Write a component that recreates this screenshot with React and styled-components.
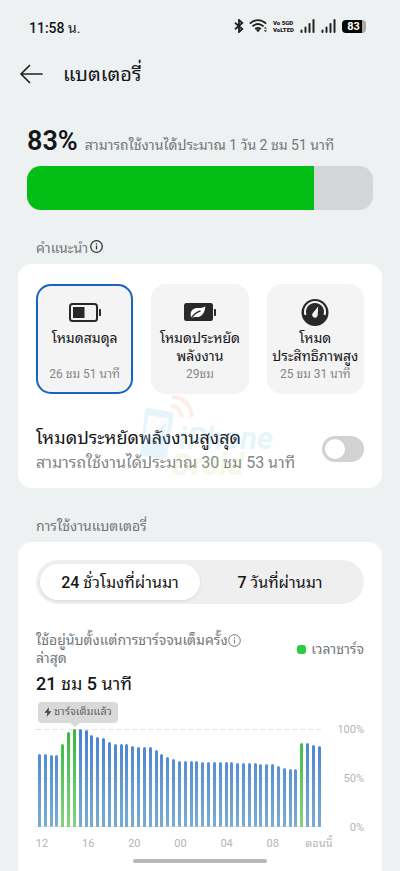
import React, { useState } from 'react';
import styled, { createGlobalStyle } from 'styled-components';

const GlobalStyle = createGlobalStyle`
  * {
    box-sizing: border-box;
  }
  body {
    margin: 0;
    background: #edf1f2;
    color: #151618;
    font-family: Roboto, "Noto Sans Thai Looped", "Noto Sans", sans-serif;
  }
  button {
    font: inherit;
    color: inherit;
    border: 0;
    padding: 0;
    background: none;
    cursor: pointer;
  }
  h1, h2, h3, p {
    margin: 0;
    font-weight: 400;
  }
  svg {
    display: block;
    flex: none;
  }
`

const Page = styled.div`
  display: flex;
  flex-direction: column;
  min-height: 100vh;
`

const StatusBar = styled.div`
  display: flex;
  align-items: center;
  justify-content: space-between;
  height: 52px;
  padding: 0 34px 0 29px;
  font-size: 14px;
`

const Num = styled.b`
  font-weight: 500;
`

const StatusIcons = styled.div`
  display: flex;
  align-items: center;
  gap: 5px;
`

const Header = styled.header`
  display: flex;
  align-items: center;
  gap: 20px;
  height: 44px;
  padding: 0 20px;
`

const Title = styled.h1`
  font-size: 20px;
  line-height: 28px;
`

const Summary = styled.section`
  padding: 28px 27px 0;
`

const Level = styled.div`
  display: flex;
  align-items: baseline;
  gap: 7px;
  height: 42px;
  line-height: 34px;
  white-space: nowrap;
`

const Percent = styled.strong`
  font-size: 27px;
  font-weight: 600;
`

const Estimate = styled.span`
  font-size: 14px;
  color: #74777a;
`

const Track = styled.div`
  height: 44px;
  border-radius: 14px;
  background: #d3d6d7;
  overflow: hidden;
`

const Fill = styled.div`
  height: 100%;
  background: #02be14;
`

const SectionLabel = styled.h2`
  display: flex;
  align-items: center;
  gap: 2px;
  height: 54px;
  padding: 18px 36px 0;
  font-size: 14px;
  color: #74777a;
`

const Card = styled.section`
  position: relative;
  margin: 0 18px;
  padding: ${props => props.$grow ? '18px' : '20px 18px 0'};
  border-radius: ${props => props.$grow ? '14px 14px 0 0' : '14px'};
  background: #fff;
  flex: ${props => props.$grow ? '1' : 'none'};
`

const Modes = styled.div`
  display: grid;
  grid-template-columns: repeat(3, 1fr);
  gap: 18px;
`

const Mode = styled.button`
  display: flex;
  flex-direction: column;
  align-items: center;
  height: 110px;
  padding-top: 14px;
  border-radius: 15px;
  background: #f4f4f4;
  box-shadow: ${props => props.$active ? 'inset 0 0 0 2px #1763c0' : 'none'};
`

const ModeName = styled.span`
  height: 37px;
  margin-top: 1px;
  font-size: 14px;
  line-height: 18px;
  white-space: pre;
`

const ModeTime = styled.span`
  font-size: 12px;
  line-height: 16px;
  color: #858585;
  white-space: nowrap;
`

const SuperRow = styled.div`
  display: flex;
  align-items: center;
  justify-content: space-between;
  height: 78px;
  margin-top: 16px;
`

const RowText = styled.label`
  display: flex;
  flex-direction: column;
  padding-top: 2px;
  line-height: 25px;
  font-size: 18px;
  white-space: nowrap;
`

const RowHint = styled.span`
  font-size: 16px;
  color: #858585;
`

const Switch = styled.input`
  appearance: none;
  display: flex;
  align-items: center;
  justify-content: ${props => props.checked ? 'flex-end' : 'flex-start'};
  flex: none;
  width: 42px;
  height: 26px;
  margin: 0;
  padding: 3px;
  border-radius: 13px;
  background: ${props => props.checked ? '#1763c0' : '#d2d2d2'};
  &::before {
    content: '';
    width: 20px;
    height: 20px;
    border-radius: 50%;
    background: #fff;
  }
`

const Watermark = styled.div`
  position: absolute;
  left: 121px;
  top: 128px;
  display: flex;
  pointer-events: none;
  font-size: 31px;
  font-style: italic;
  font-weight: 700;
  line-height: 26px;
  opacity: 0.15;
`

const WatermarkText = styled.div`
  display: flex;
  flex-direction: column;
  margin-left: -18px;
  padding-top: 34px;
  color: #62bde8;
`

const WatermarkGreen = styled.span`
  margin-left: -7px;
  color: #bcd878;
`

const Tabs = styled.div`
  display: grid;
  grid-template-columns: 1fr 1fr;
  height: 44px;
  padding: 4px;
  border-radius: 22px;
  background: #efefef;
`

const Tab = styled.button`
  padding-bottom: 3px;
  border-radius: 18px;
  font-size: 16px;
  white-space: nowrap;
  background: ${props => props.$active ? '#fff' : 'transparent'};
  box-shadow: ${props => props.$active ? '0 1px 3px rgba(0, 0, 0, 0.1)' : 'none'};
`

const UsageHead = styled.div`
  display: flex;
  justify-content: space-between;
  align-items: center;
  margin-top: 27px;
  font-size: 14px;
  line-height: 18px;
  color: #74777a;
`

const Since = styled.p`
  white-space: nowrap;
`

const SinceLine = styled.span`
  display: flex;
  align-items: center;
`

const Legend = styled.div`
  display: flex;
  align-items: center;
  gap: 5px;
  &::before {
    content: '';
    width: 9px;
    height: 9px;
    border-radius: 3px;
    background: #2bcb42;
  }
`

const Duration = styled.h3`
  margin-top: 4px;
  font-size: 18px;
  line-height: 26px;
`

const Chart = styled.div`
  display: grid;
  grid-template-columns: 1fr 43px;
  margin-top: 32px;
`

const Plot = styled.div`
  position: relative;
  display: flex;
  align-items: flex-end;
  justify-content: space-between;
  height: 98px;
  padding: 0 0 0 2px;
  background:
    repeating-linear-gradient(90deg, #e3e3e3 0 5px, transparent 5px 8px) top / 100% 1px no-repeat,
    linear-gradient(#eeeeee, #eeeeee) center / 100% 1px no-repeat,
    linear-gradient(#e3e3e3, #e3e3e3) bottom / 100% 1px no-repeat;
`

const Bar = styled.div`
  width: 3px;
  border-radius: 2px 2px 0 0;
  background: ${props => props.$charging
    ? 'linear-gradient(#35b83f, #83d47f) bottom / 100% 98px'
    : 'linear-gradient(#457fd3, #79add3) bottom / 100% 98px'};
`

const Callout = styled.div`
  position: absolute;
  left: 2px;
  top: -27px;
  display: flex;
  align-items: center;
  gap: 2px;
  height: 21px;
  padding: 0 6px 2px;
  border-radius: 4px;
  background: #d9d9d9;
  color: #666;
  font-size: 11px;
  line-height: 16px;
  white-space: nowrap;
  &::after {
    content: '';
    position: absolute;
    left: 32px;
    top: 100%;
    border: 5px solid transparent;
    border-top: 4px solid #d9d9d9;
    border-bottom: 0;
  }
`

const Scale = styled.div`
  display: flex;
  flex-direction: column;
  justify-content: space-between;
  height: 112px;
  margin-top: -6px;
  font-size: 11px;
  line-height: 14px;
  text-align: right;
  color: #b4b4b4;
`

const Hours = styled.div`
  display: flex;
  justify-content: space-between;
  margin: 8px -4px 0 0;
  font-size: 11px;
  line-height: 18px;
  color: #b4b4b4;
`

const Hour = styled.span`
  display: flex;
  justify-content: center;
  width: 12px;
  white-space: nowrap;
`

const HomeIndicator = styled.div`
  position: fixed;
  left: 50%;
  bottom: 8px;
  width: 134px;
  height: 4px;
  border-radius: 2px;
  background: #b8b8b8;
  transform: translateX(-50%);
`

const BluetoothIcon = () => (
  <svg width="10" height="14" viewBox="0 0 10 14" fill="none" stroke="#222" strokeWidth="1.8">
    <path d="M1 3.7 8.3 10 5 13V1l3.3 3L1 10.3" />
  </svg>
)

const WifiIcon = () => (
  <svg width="19" height="14" viewBox="0 0 19 14" fill="none" stroke="#222" strokeWidth="1.8">
    <path d="M.8 4.6q8.2-7 16.4 0M3.4 7.4q5.6-4.7 11.2 0M6.1 10q2.9-2.3 5.8 0" />
    <path d="m6.8 10.8 2.2 2.4 2.2-2.4q-2.2-1.7-4.4 0Z" fill="#222" stroke="none" />
    <path d="M14.8 9.6 16.4 8l1.6 1.6zM14.8 11.3l1.6 1.6 1.6-1.6z" fill="#222" stroke="none" />
  </svg>
)

const Carrier = styled.span`
  display: flex;
  flex-direction: column;
  width: 22px;
  font-size: 6px;
  font-weight: 900;
  line-height: 7px;
  white-space: nowrap;
`

const SignalIcon = () => (
  <svg width="16" height="14" viewBox="0 0 16 14" stroke="#222" strokeWidth="2" strokeLinecap="round">
    <path d="M1.5 11.5V13M5.5 8.5V13M9.5 5v8M13.5 1v12" />
  </svg>
)

const BatteryBadge = styled.span`
  display: flex;
  align-items: center;
  justify-content: center;
  width: 24px;
  height: 13px;
  padding-right: 1px;
  border-radius: 4px;
  background: linear-gradient(90deg, #050505 85%, #a7aaab 85%);
  color: #fff;
  font-size: 11px;
  font-weight: 700;
`

const BackIcon = () => (
  <svg width="23" height="20" viewBox="0 0 23 20" fill="none" stroke="#222" strokeWidth="1.7" strokeLinecap="round" strokeLinejoin="round">
    <path d="M22 10H1M9.5 1.5 1 10l8.5 8.5" />
  </svg>
)

const InfoIcon = props => (
  <svg width="13" height="13" viewBox="0 0 13 13" fill="none" stroke={props.color} strokeWidth={props.weight}>
    <circle cx="6.5" cy="6.5" r="5.8" />
    <path d="M6.5 5.6v4M6.5 3.2v1.3" />
  </svg>
)

const BalancedIcon = () => (
  <svg width="34" height="30" viewBox="0 0 34 30">
    <rect x="2" y="6" width="27" height="17" rx="2.5" fill="none" stroke="#292929" strokeWidth="2" />
    <path d="M5 9h11.5v11H5z" fill="#292929" />
    <path d="M31 11h1q1 0 1 1v5q0 1-1 1h-1z" fill="#292929" />
  </svg>
)

const SaverIcon = () => (
  <svg width="34" height="30" viewBox="0 0 34 30">
    <rect x="1" y="5" width="29" height="18" rx="2.5" fill="#292929" />
    <path d="M31 11h1q1 0 1 1v5q0 1-1 1h-1z" fill="#292929" />
    <path d="M8 19.5c-1.5-7 2-9.5 7-9.5 3 0 5-.3 7.3-1.8-.3 7.5-4.5 12-11.3 10.7L8.5 20.5Z" fill="#fff" />
    <path d="M8 20.5c2.5-4 5.5-6.3 9.5-7.7" fill="none" stroke="#292929" strokeWidth="1.3" />
  </svg>
)

const PerformanceIcon = () => (
  <svg width="34" height="30" viewBox="0 0 34 30">
    <circle cx="17" cy="14.5" r="13.5" fill="#292929" />
    <path d="M7.5 17a10 10 0 1 1 19 0" fill="none" stroke="#f4f4f4" strokeWidth="2" />
    <path d="M20.2 8.5 19.7 17a2.8 2.8 0 1 1-5.2-1.6Z" fill="#f4f4f4" />
  </svg>
)

const BoltIcon = () => (
  <svg width="8" height="10" viewBox="0 0 8 10" fill="#444">
    <path d="M5 .3.5 5.7h2.8l-.5 4.1 4.7-5.5H4.6Z" />
  </svg>
)

const PhoneMark = () => (
  <svg width="58" height="74" viewBox="0 0 58 74">
    <path d="M9 16 32 20q3 1 2.5 4L28 65q-.5 3-3.5 2.5L4 64q-3-.5-2.5-3.5L6 19q.5-3 3-3Z" fill="#62bde8" />
    <path d="m9 23 21 3.5-4 29L5 52Z" fill="#e8f8ff" />
    <path d="m5 52 22-22-2 26Z" fill="#62bde8" />
    <g fill="none" stroke="#f5925b" strokeWidth="4">
      <path d="M32 14q9 0 11 11M33 5q18 1 20 20" />
    </g>
  </svg>
)

const modes = [
  { name: 'โหมดสมดุล', time: '26 ชม 51 นาที', icon: <BalancedIcon /> },
  { name: 'โหมดประหยัด\nพลังงาน', time: '29ชม', icon: <SaverIcon /> },
  { name: 'โหมด\nประสิทธิภาพสูง', time: '25 ชม 31 นาที', icon: <PerformanceIcon /> },
]

const tabs = [
  { count: 24, name: 'ชั่วโมงที่ผ่านมา' },
  { count: 7, name: 'วันที่ผ่านมา' },
]

const levels = [
  75, 74, 73, 73, 85, 97, 100, 100, 99, 94, 92, 91, 87, 85, 85, 85, 83, 82, 82, 82, 79, 75, 71, 69, 67,
  67, 67, 67, 66, 66, 66, 66, 66, 66, 65, 65, 65, 65, 64, 64, 64, 62, 60, 59, 59, 86, 86, 84, 83,
]

const charging = [4, 5, 6, 45]

const hours = ['12', '16', '20', '00', '04', '08', 'ตอนนี้']

const App = () => {
  const [mode, setMode] = useState(0)
  const [tab, setTab] = useState(0)
  const [superSaver, setSuperSaver] = useState(false)

  return (
    <Page>
      <GlobalStyle />
      <StatusBar>
        <span><Num>11:58</Num> น.</span>
        <StatusIcons>
          <BluetoothIcon />
          <WifiIcon />
          <Carrier><span>Vo 5GD</span><span>VoLTED</span></Carrier>
          <SignalIcon />
          <SignalIcon />
          <BatteryBadge>83</BatteryBadge>
        </StatusIcons>
      </StatusBar>
      <Header>
        <button aria-label="ย้อนกลับ"><BackIcon /></button>
        <Title>แบตเตอรี่</Title>
      </Header>
      <Summary>
        <Level>
          <Percent>83%</Percent>
          <Estimate>สามารถใช้งานได้ประมาณ 1 วัน 2 ชม 51 นาที</Estimate>
        </Level>
        <Track><Fill style={{ width: '83%' }} /></Track>
      </Summary>
      <SectionLabel>
        คำแนะนำ
        <InfoIcon color="#333" weight="1.3" />
      </SectionLabel>
      <Card>
        <Modes>
          {modes.map((item, i) => (
            <Mode key={item.time} $active={mode === i} aria-pressed={mode === i} onClick={() => setMode(i)}>
              {item.icon}
              <ModeName>{item.name}</ModeName>
              <ModeTime>{item.time}</ModeTime>
            </Mode>
          ))}
        </Modes>
        <SuperRow>
          <RowText htmlFor="super-saver">
            โหมดประหยัดพลังงานสูงสุด
            <RowHint>สามารถใช้งานได้ประมาณ 30 ชม 53 นาที</RowHint>
          </RowText>
          <Switch
            id="super-saver"
            type="checkbox"
            role="switch"
            checked={superSaver}
            onChange={e => setSuperSaver(e.target.checked)}
          />
        </SuperRow>
        <Watermark>
          <PhoneMark />
          <WatermarkText>
            <span>iPhone</span>
            <WatermarkGreen>Droid</WatermarkGreen>
          </WatermarkText>
        </Watermark>
      </Card>
      <SectionLabel>การใช้งานแบตเตอรี่</SectionLabel>
      <Card $grow>
        <Tabs>
          {tabs.map((item, i) => (
            <Tab key={item.count} $active={tab === i} aria-pressed={tab === i} onClick={() => setTab(i)}>
              <Num>{item.count}</Num> {item.name}
            </Tab>
          ))}
        </Tabs>
        <UsageHead>
          <Since>
            <SinceLine>
              ใช้อยู่นับตั้งแต่การชาร์จจนเต็มครั้ง
              <InfoIcon color="#777" weight="1" />
            </SinceLine>
            ล่าสุด
          </Since>
          <Legend>เวลาชาร์จ</Legend>
        </UsageHead>
        <Duration><Num>21</Num> ชม <Num>5</Num> นาที</Duration>
        <Chart>
          <div>
            <Plot>
              {levels.map((level, i) => (
                <Bar key={i} $charging={charging.includes(i)} style={{ height: `${level}%` }} />
              ))}
              <Callout><BoltIcon />ชาร์จเต็มแล้ว</Callout>
            </Plot>
            <Hours>
              {hours.map(hour => <Hour key={hour}>{hour}</Hour>)}
            </Hours>
          </div>
          <Scale>
            <span>100%</span>
            <span>50%</span>
            <span>0%</span>
          </Scale>
        </Chart>
      </Card>
      <HomeIndicator />
    </Page>
  )
}

export default App
